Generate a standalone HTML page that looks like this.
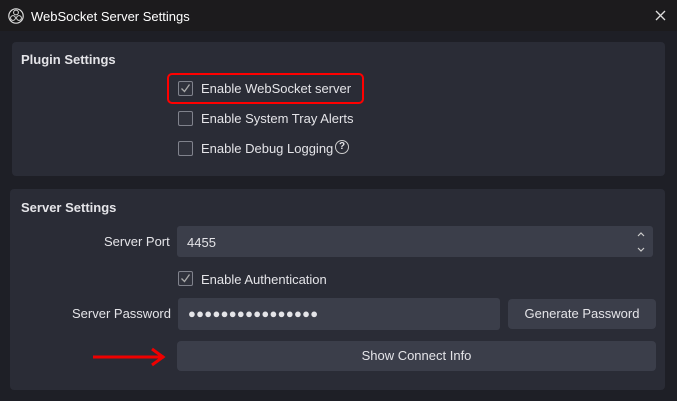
<!DOCTYPE html><html><head><style>
body{margin:0;width:677px;height:401px;background:#1e1f26;font-family:"Liberation Sans",sans-serif;color:#e4e4e8;font-size:13px;position:relative;overflow:hidden}
.a{position:absolute}
.title{left:0;top:0;width:677px;height:31px;background:#1c1b1d}
.panel{background:#2a2c36;border-radius:4px}
.h{font-weight:bold;font-size:13px}
.cb{width:13px;height:13px;border:1px solid #80828c;border-radius:2px;background:#30323c}
.inp{background:#3b3e4a;border-radius:3px}
.btn{background:#3b3e4a;border-radius:4px;text-align:center;line-height:30px}
</style></head><body>
<div class="a title"></div>
<svg class="a" style="left:8px;top:8px" width="16" height="16" viewBox="0 0 16 16"><circle cx="8" cy="8" r="7.2" fill="#111" stroke="#ddd" stroke-width="1.2"/><circle cx="8" cy="4.5" r="2.4" fill="none" stroke="#ddd" stroke-width="1"/><circle cx="5" cy="10" r="2.4" fill="none" stroke="#ddd" stroke-width="1"/><circle cx="11" cy="10" r="2.4" fill="none" stroke="#ddd" stroke-width="1"/></svg>
<div class="a" style="left:31px;top:9px;font-size:13px;color:#fff">WebSocket Server Settings</div>
<svg class="a" style="left:655px;top:10px" width="11" height="11"><path d="M1 1L10 10M10 1L1 10" stroke="#ddd" stroke-width="1.3"/></svg>
<div class="a panel" style="left:12px;top:42px;width:653px;height:134px"></div>
<div class="a h" style="left:21px;top:52px">Plugin Settings</div>
<div class="a" style="left:167px;top:73px;width:193px;height:27px;border:2.5px solid #f00;border-radius:5px"></div>
<div class="a cb" style="left:178px;top:81px"></div><svg class="a" style="left:180px;top:83px" width="11" height="11"><path d="M1.5 5.5L4.5 8.5L9.5 1.5" stroke="#aaa" stroke-width="1.3" fill="none"/></svg>
<div class="a" style="left:201px;top:81px">Enable WebSocket server</div>
<div class="a cb" style="left:178px;top:111px"></div>
<div class="a" style="left:201px;top:111px">Enable System Tray Alerts</div>
<div class="a cb" style="left:178px;top:141px"></div>
<div class="a" style="left:201px;top:141px">Enable Debug Logging</div>
<div class="a" style="left:335px;top:140px;width:12px;height:12px;border:1.5px solid #ccc;border-radius:50%;font-size:10px;text-align:center;line-height:12px;font-weight:bold">?</div>
<div class="a panel" style="left:10px;top:189px;width:655px;height:201px"></div>
<div class="a h" style="left:21px;top:200px">Server Settings</div>
<div class="a" style="left:104px;top:234px">Server Port</div>
<div class="a inp" style="left:177px;top:226px;width:476px;height:31px"></div>
<div class="a" style="left:187px;top:235px">4455</div>
<svg class="a" style="left:636px;top:231px" width="10" height="22"><path d="M2 5L5 2L8 5M2 17L5 20L8 17" stroke="#ccc" stroke-width="1.2" fill="none"/></svg>
<div class="a cb" style="left:178px;top:271px"></div><svg class="a" style="left:180px;top:273px" width="11" height="11"><path d="M1.5 5.5L4.5 8.5L9.5 1.5" stroke="#aaa" stroke-width="1.3" fill="none"/></svg>
<div class="a" style="left:201px;top:272px">Enable Authentication</div>
<div class="a" style="left:72px;top:306px">Server Password</div>
<div class="a inp" style="left:178px;top:298px;width:322px;height:32px"></div>
<div class="a" style="left:188px;top:306px;letter-spacing:0.3px;font-size:13px">●●●●●●●●●●●●●●●●</div>
<div class="a btn" style="left:508px;top:299px;width:148px;height:30px">Generate Password</div>
<div class="a btn" style="left:177px;top:341px;width:479px;height:30px">Show Connect Info</div>
<svg class="a" style="left:90px;top:346px" width="80" height="22"><path d="M3 11H74M62 3L73 11L62 19" stroke="#e00" stroke-width="3" fill="none"/></svg>
</body></html>
